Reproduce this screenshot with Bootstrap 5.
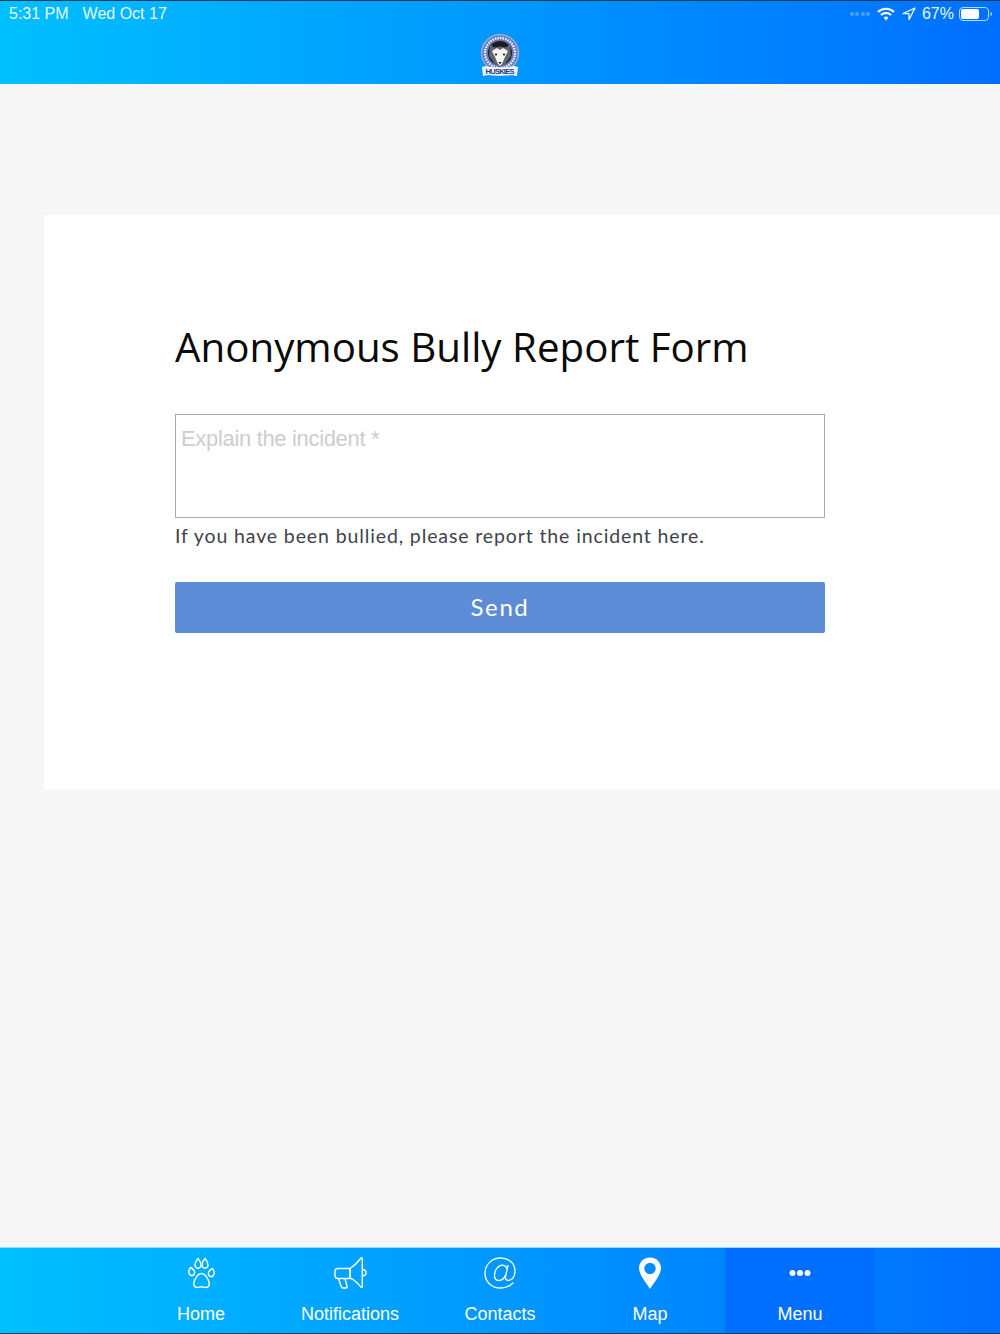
<!DOCTYPE html>
<html lang="en">
<head>
  <meta charset="UTF-8">
  <meta name="viewport" content="width=device-width,initial-scale=1">
  <title>Anonymous Bully Report Form</title>
  <link href="https://cdn.jsdelivr.net/npm/bootstrap@5.3.2/dist/css/bootstrap.min.css" rel="stylesheet">
  <style>
    html, body { height: 100%; }
    body {
      background: #f6f6f6;
      font-family: "Liberation Sans", Arial, sans-serif;
      overflow: hidden;
    }
    .app-shell { height: 1334px; }
    .top-bar {
      height: 84px;
      background: linear-gradient(90deg, #00c0ff 0%, #006fff 100%);
      border-top: 1px solid #0b3a55;
      color: #fff;
    }
    .status-row {
      height: 26px;
      padding: 0 6px 0 9px;
      font-size: 16px;
      line-height: 26px;
      color: #e8f7ff;
    }
    .status-time { margin-right: 14px; }
    .status-dots { gap: 1.5px; margin-right: 7px; }
    .status-dots span { width: 4px; height: 4px; border-radius: 50%; background: rgba(255,255,255,.3); }
    .status-wifi { margin-right: 6.5px; }
    .status-arrow { margin-right: 6px; }
    .logo-row { height: 57px; padding-top: 6px; }
    .main-area { padding: 131px 0 0 44px; }
    .form-panel {
      height: 575px;
      background: #fff;
      padding: 103px 175px 0 131px;
    }
    .form-title {
      font-family: "Open Sans", sans-serif;
      font-size: 40.3px;
      line-height: 58px;
      font-weight: 400;
      color: #0a0a0a;
      margin: 0 0 38px;
      white-space: nowrap;
    }
    .incident-box {
      display: block;
      width: 100%;
      height: 104px;
      border: 1px solid #a9a9a9;
      border-radius: 0;
      padding: 9px 5px;
      font-size: 22px;
      line-height: 30px;
      letter-spacing: -.33px;
      resize: none;
      background: #fff;
    }
    .incident-box::placeholder { color: #cdcdcd; opacity: 1; }
    .help-line {
      font-family: "Lato", sans-serif;
      font-size: 19.5px;
      line-height: 26px;
      letter-spacing: .88px;
      color: #41424f;
      margin: 5px 0 33px;
      white-space: nowrap;
    }
    .send-btn {
      display: block;
      width: 100%;
      height: 51px;
      background: #5d8cd7;
      border: 0;
      border-radius: 2px;
      color: #fff;
      font-family: "Lato", sans-serif;
      font-size: 24px;
      letter-spacing: 1.6px;
      padding: 0 0 2px;
    }
    .tab-bar {
      height: 87px;
      background: linear-gradient(90deg, #00c0ff 0%, #006fff 100%);
      border-top: 1px solid #8fdcff;
      border-bottom: 1px solid #0b3a55;
      padding-left: 125px;
    }
    .tab-link {
      width: 150px;
      height: 100%;
      color: #fff;
      text-decoration: none;
      font-size: 18px;
      line-height: 22px;
    }
    .tab-link.is-current { background: #006fff; }
    .tab-icon { height: 44px; margin-top: 6px; margin-bottom: 5px; }
    .tab-first { padding-left: 2px; }
  </style>
</head>
<body>
  <div class="app-shell d-flex flex-column">
    <header class="top-bar flex-shrink-0">
      <div class="status-row d-flex align-items-center">
        <span class="status-time">5:31 PM</span>
        <span>Wed Oct 17</span>
        <div class="status-dots d-flex ms-auto"><span></span><span></span><span></span><span></span></div>
        <svg width="18" height="14" viewBox="0 0 18 14" fill="none" stroke="#fff" stroke-width="2.2" class="status-wifi">
          <path d="M1 5a11.5 11.5 0 0 1 16 0"/>
          <path d="M4 8a7.2 7.2 0 0 1 10 0"/>
          <path d="M9 13.5 6.6 10.8a3.4 3.4 0 0 1 4.8 0Z" fill="#fff" stroke="none"/>
        </svg>
        <svg width="14" height="14" viewBox="0 0 14 14" fill="none" stroke="#e8f7ff" stroke-width="1.3" class="status-arrow">
          <path d="M13 1 1 6.6h6V12.6Z" stroke-linejoin="round"/>
        </svg>
        <span class="me-1">67%</span>
        <svg width="36" height="16" viewBox="0 0 36 16" fill="none">
          <rect x="1.5" y="1.5" width="29" height="13" rx="3.5" stroke="#a9dcff"/>
          <rect x="3" y="3" width="18" height="10" rx="2" fill="#fff"/>
          <path d="M32.5 6v4c1-.3 1.6-1 1.6-2s-.6-1.7-1.6-2Z" fill="#a9dcff"/>
        </svg>
      </div>
      <div class="logo-row d-flex justify-content-center">
        <svg width="42" height="44" viewBox="0 0 42 44">
          <circle cx="21" cy="20" r="19" fill="#5b78bd"/>
          <circle cx="21" cy="20" r="18.3" fill="none" stroke="#a9b7dc" stroke-width="1.2"/>
          <circle cx="21" cy="20" r="15" fill="none" stroke="#eef2fa" stroke-width="2.5" stroke-dasharray="1.6 1"/>
          <circle cx="21" cy="20" r="12" fill="#1a1a20"/>
          <path d="M11 11l4 3.5 6-1 6 1 4-3.5 1 12-6 8-5 3-5-3-6-8Z" fill="#62656c"/>
          <path d="M21 17l3-2 5 3-3 6-3 7-2 2-2-2-3-7-3-6 5-3Z" fill="#f5f5f5"/>
          <path d="M19.5 29h3L21 31.5Z" fill="#111"/>
          <circle cx="17" cy="21.5" r="1.1" fill="#111"/>
          <circle cx="25" cy="21.5" r="1.1" fill="#111"/>
          <path d="M3 34l4-1c9 2 19 2 28 0l4 1-1 9-5-1c-6 1-18 1-24 0l-5 1Z" fill="#f2f5fb"/>
          <text x="21" y="41" text-anchor="middle" font-family="Liberation Sans" font-weight="700" font-size="7.5" fill="#233a7a" textLength="29">HUSKIES</text>
        </svg>
      </div>
    </header>

    <main class="main-area flex-grow-1">
      <section class="form-panel">
        <h1 class="form-title">Anonymous Bully Report Form</h1>
        <form onsubmit="return false">
          <textarea class="incident-box" placeholder="Explain the incident *"></textarea>
          <p class="help-line">If you have been bullied, please report the incident here.</p>
          <button type="submit" class="send-btn">Send</button>
        </form>
      </section>
    </main>

    <nav class="tab-bar d-flex flex-shrink-0">
      <a href="#" class="tab-link tab-first d-flex flex-column align-items-center">
        <svg class="tab-icon" width="30" height="44" viewBox="0 0 30 44" fill="none" stroke="#fff" stroke-width="1.4" stroke-linejoin="round">
          <path d="M12 4.5c-1.800 2-3 4-3 6.300 0 2 1.200 3.400 3 3.400s3-1.400 3-3.400c0-2.300-1.200-4.300-3-6.300Z"/>
          <path d="M19 4.5c-1.800 2-3 4-3 6.300 0 2 1.200 3.400 3 3.400s3-1.400 3-3.400c0-2.300-1.200-4.300-3-6.300Z"/>
          <path d="M4.5 13.500c-1.300 1.800-2 3.300-1.700 5 .3 2 1.800 3.300 3.500 3 1.700-.3 2.500-2 2.200-3.800-.3-1.800-2-3.200-4-4.200Z"/>
          <path d="M26.500 14.500c-2 1-3.700 2.400-4 4.200-.3 1.800.5 3.500 2.200 3.800 1.700.3 3.200-1 3.500-3 .3-1.700-.4-3.200-1.700-5Z"/>
          <path d="M15.500 19.500c3 0 5 3 6.500 5.800 1.800 3.200 2 7.700-1.800 8.200-2 .3-2.900-.8-4.700-.8s-2.700 1.100-4.700.8c-3.800-.5-3.600-5-1.800-8.200 1.500-2.800 3.500-5.800 6.500-5.800Z"/>
        </svg>
        <span>Home</span>
      </a>
      <a href="#" class="tab-link d-flex flex-column align-items-center">
        <svg class="tab-icon" width="36" height="44" viewBox="0 0 36 44" fill="none" stroke="#fff" stroke-width="1.4" stroke-linejoin="round">
          <path d="M18 14.500H6c-2 0-3 1-3 3v3.500c0 2.200 1 3.500 3 3.500h12"/>
          <path d="M18 14.500c4-2.500 8-6.500 11-10.500.7-.6 1.300-.3 1.300.7v27.700c0 1-.6 1.300-1.300.7-3-3.500-7-8-11-9Z"/>
          <path d="M18 14.500v10.200M30.300 15.500c2.700.3 3.700 1.700 3.700 3.300s-1 3-3.700 3.300"/>
          <path d="M6.500 24.500l2.700 8c.3 1 1 1.500 1.800 1.500h3c.9 0 1.300-.8 1-1.700l-2-7.800"/>
        </svg>
        <span>Notifications</span>
      </a>
      <a href="#" class="tab-link d-flex flex-column align-items-center">
        <svg class="tab-icon" width="34" height="44" viewBox="0 0 34 44" fill="none" stroke="#fff" stroke-width="1.3" stroke-linecap="round">
          <path d="M30 29c-3.500 3.300-7.500 5-12.500 5C9 34 2 28 2 19.500 2 10.500 9 4 17.500 4 25.500 4 32 9 32 17c0 5.500-3 9.500-6.500 9.500-2.500 0-3.500-1.500-3-4l2.500-11"/>
          <path d="M24 14.500c-.8-2-2.500-3.300-4.500-3.300-4.500 0-8 5-8 10 0 3.200 1.700 5.300 4.300 5.300 3.200 0 5.700-2.800 6.700-5.500"/>
        </svg>
        <span>Contacts</span>
      </a>
      <a href="#" class="tab-link d-flex flex-column align-items-center">
        <svg class="tab-icon" width="24" height="44" viewBox="0 0 24 44">
          <path fill="#fff" fill-rule="evenodd" d="M12 3.500c6.200 0 11 4.700 11 10.800 0 6.200-7.300 14.700-11 20.700C8.300 29 1 20.500 1 14.300 1 8.200 5.800 3.500 12 3.500Zm0 5.300a5.700 5.700 0 1 0 0 11.400 5.700 5.700 0 0 0 0-11.400Z"/>
        </svg>
        <span>Map</span>
      </a>
      <a href="#" class="tab-link is-current d-flex flex-column align-items-center">
        <svg class="tab-icon" width="24" height="44" viewBox="0 0 24 44" fill="#fff">
          <circle cx="4.5" cy="19" r="3"/>
          <circle cx="12" cy="19" r="3"/>
          <circle cx="19.5" cy="19" r="3"/>
        </svg>
        <span>Menu</span>
      </a>
    </nav>
  </div>
  <script src="https://cdn.jsdelivr.net/npm/bootstrap@5.3.2/dist/js/bootstrap.bundle.min.js"></script>
</body>
</html>
